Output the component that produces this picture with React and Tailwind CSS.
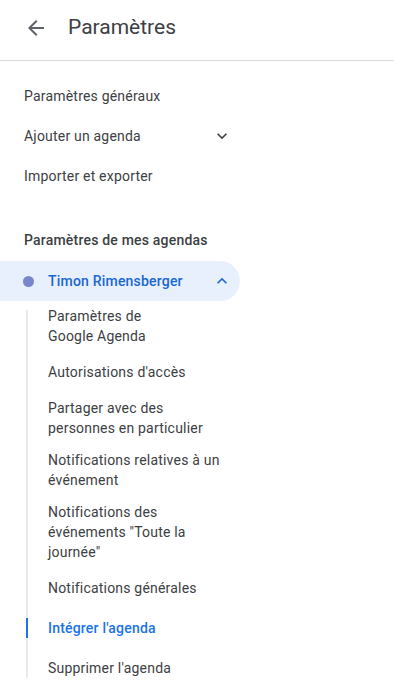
import React from "react";

function ArrowBack({ className }) {
  return (
    <svg viewBox="0 0 24 24" className={className} fill="currentColor">
      <path d="M20 11H7.83l5.59-5.59L12 4l-8 8 8 8 1.41-1.41L7.83 13H20v-2z" />
    </svg>
  );
}

function Chevron({ up, className }) {
  return (
    <svg viewBox="0 0 24 24" className={className} fill="currentColor">
      {up ? (
        <path d="M12 8l-6 6 1.41 1.41L12 10.83l4.59 4.58L18 14z" />
      ) : (
        <path d="M16.59 8.59L12 13.17 7.41 8.59 6 10l6 6 6-6z" />
      )}
    </svg>
  );
}

const subItems = [
  ["Paramètres de", "Google Agenda"],
  ["Autorisations d'accès"],
  ["Partager avec des", "personnes en particulier"],
  ["Notifications relatives à un", "événement"],
  ["Notifications des", "événements \"Toute la", "journée\""],
  ["Notifications générales"],
  ["Intégrer l'agenda"],
  ["Supprimer l'agenda"],
];

export default function App() {
  return (
    <div
      className="w-[394px] h-[697px] overflow-hidden bg-white text-[#3c4043]"
      style={{ fontFamily: "Roboto, 'Liberation Sans', sans-serif" }}
    >
      <header className="h-[61px] flex items-center border-b border-[#dadce0]">
        <button className="ml-6 w-6 h-6 text-[#5f6368] -mt-1">
          <ArrowBack className="w-6 h-6" />
        </button>
        <h1 className="ml-5 text-[21px] leading-7 -mt-1.5 text-[#3c4043]">Paramètres</h1>
      </header>

      <nav className="pt-[15px] text-sm tracking-[0.2px]">
        <div className="w-[240px] h-10 flex items-center pl-6">Paramètres généraux</div>
        <div className="w-[240px] h-10 flex items-center justify-between pl-6 pr-2">
          <span>Ajouter un agenda</span>
          <Chevron className="w-5 h-5 text-[#3c4043]" />
        </div>
        <div className="w-[240px] h-10 flex items-center pl-6">Importer et exporter</div>

        <div className="mt-6 h-10 flex items-center pl-6 font-medium">
          Paramètres de mes agendas
        </div>

        <div className="mt-px w-[240px] h-10 flex items-center justify-between pr-2 bg-[#e8f0fe] rounded-r-full">
          <div className="flex items-center">
            <span className="ml-[23px] w-[11px] h-[11px] rounded-full bg-[#7986cb]" />
            <span className="ml-[14px] font-medium text-[#1967d2]">Timon Rimensberger</span>
          </div>
          <Chevron up className="w-5 h-5 text-[#1967d2]" />
        </div>

        <div className="flex -mt-px">
          <div className="ml-[26px] my-[10px] w-[2px] bg-[#e8eaed]" />
          <ul className="ml-5 w-[192px]">
            {subItems.map((lines, i) => {
              const active = i === 6;
              return (
                <li
                  key={i}
                  className={`relative min-h-10 py-1.5 flex flex-col justify-center leading-5 whitespace-nowrap ${
                    active ? "text-[#1a73e8] font-medium" : ""
                  }`}
                >
                  {active && (
                    <span className="absolute left-[-22px] top-[10px] w-[2px] h-5 bg-[#1a73e8]" />
                  )}
                  {lines.map((l, j) => (
                    <span key={j}>{l}</span>
                  ))}
                </li>
              );
            })}
          </ul>
        </div>
      </nav>
    </div>
  );
}
